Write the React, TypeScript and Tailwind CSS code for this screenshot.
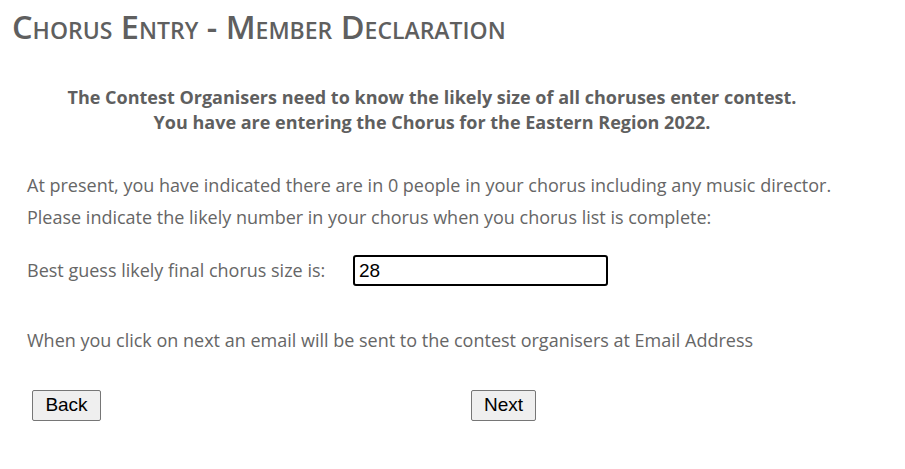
export default function App() {
  return (
    <div className="w-[905px] h-[469px] bg-white text-[#666] font-['Open_Sans',sans-serif]">
      <h1 className="pl-[12px] pt-[7px] text-[32.5px] leading-[40px] font-semibold [font-variant:small-caps] text-[#5f5f5f]">
        Chorus Entry - Member Declaration
      </h1>

      <div className="w-[864px] mt-[38px] text-center text-[18px] leading-[25px] font-bold text-[#5f5f5f]">
        <p>The Contest Organisers need to know the likely size of all choruses enter contest.</p>
        <p>You have are entering the Chorus for the Eastern Region 2022.</p>
      </div>

      <div className="pl-[27px] mt-[34px] text-[18px] leading-[32px]">
        <p>At present, you have indicated there are in 0 people in your chorus including any music director.</p>
        <p>Please indicate the likely number in your chorus when you chorus list is complete:</p>
      </div>

      <div className="flex items-center pl-[27px] mt-[22px]">
        <span className="w-[326px] text-[18px]">Best guess likely final chorus size is:</span>
        <input
          type="text"
          defaultValue="28"
          className="w-[255px] h-[31px] border-2 border-black rounded-[3px] px-[4px] text-[19px] text-black font-['Liberation_Sans',sans-serif] outline-none"
        />
      </div>

      <p className="pl-[27px] mt-[42px] text-[18px] leading-[24px]">
        When you click on next an email will be sent to the contest organisers at Email Address
      </p>

      <div className="flex mt-[38px] pl-[32px] font-['Liberation_Sans',sans-serif] text-[19px] text-black">
        <button className="w-[69px] h-[31px] border border-[#767676] rounded-[2px] bg-[#efefef]">Back</button>
        <button className="ml-[370px] w-[65px] h-[31px] border border-[#767676] rounded-[2px] bg-[#efefef]">Next</button>
      </div>
    </div>
  );
}
